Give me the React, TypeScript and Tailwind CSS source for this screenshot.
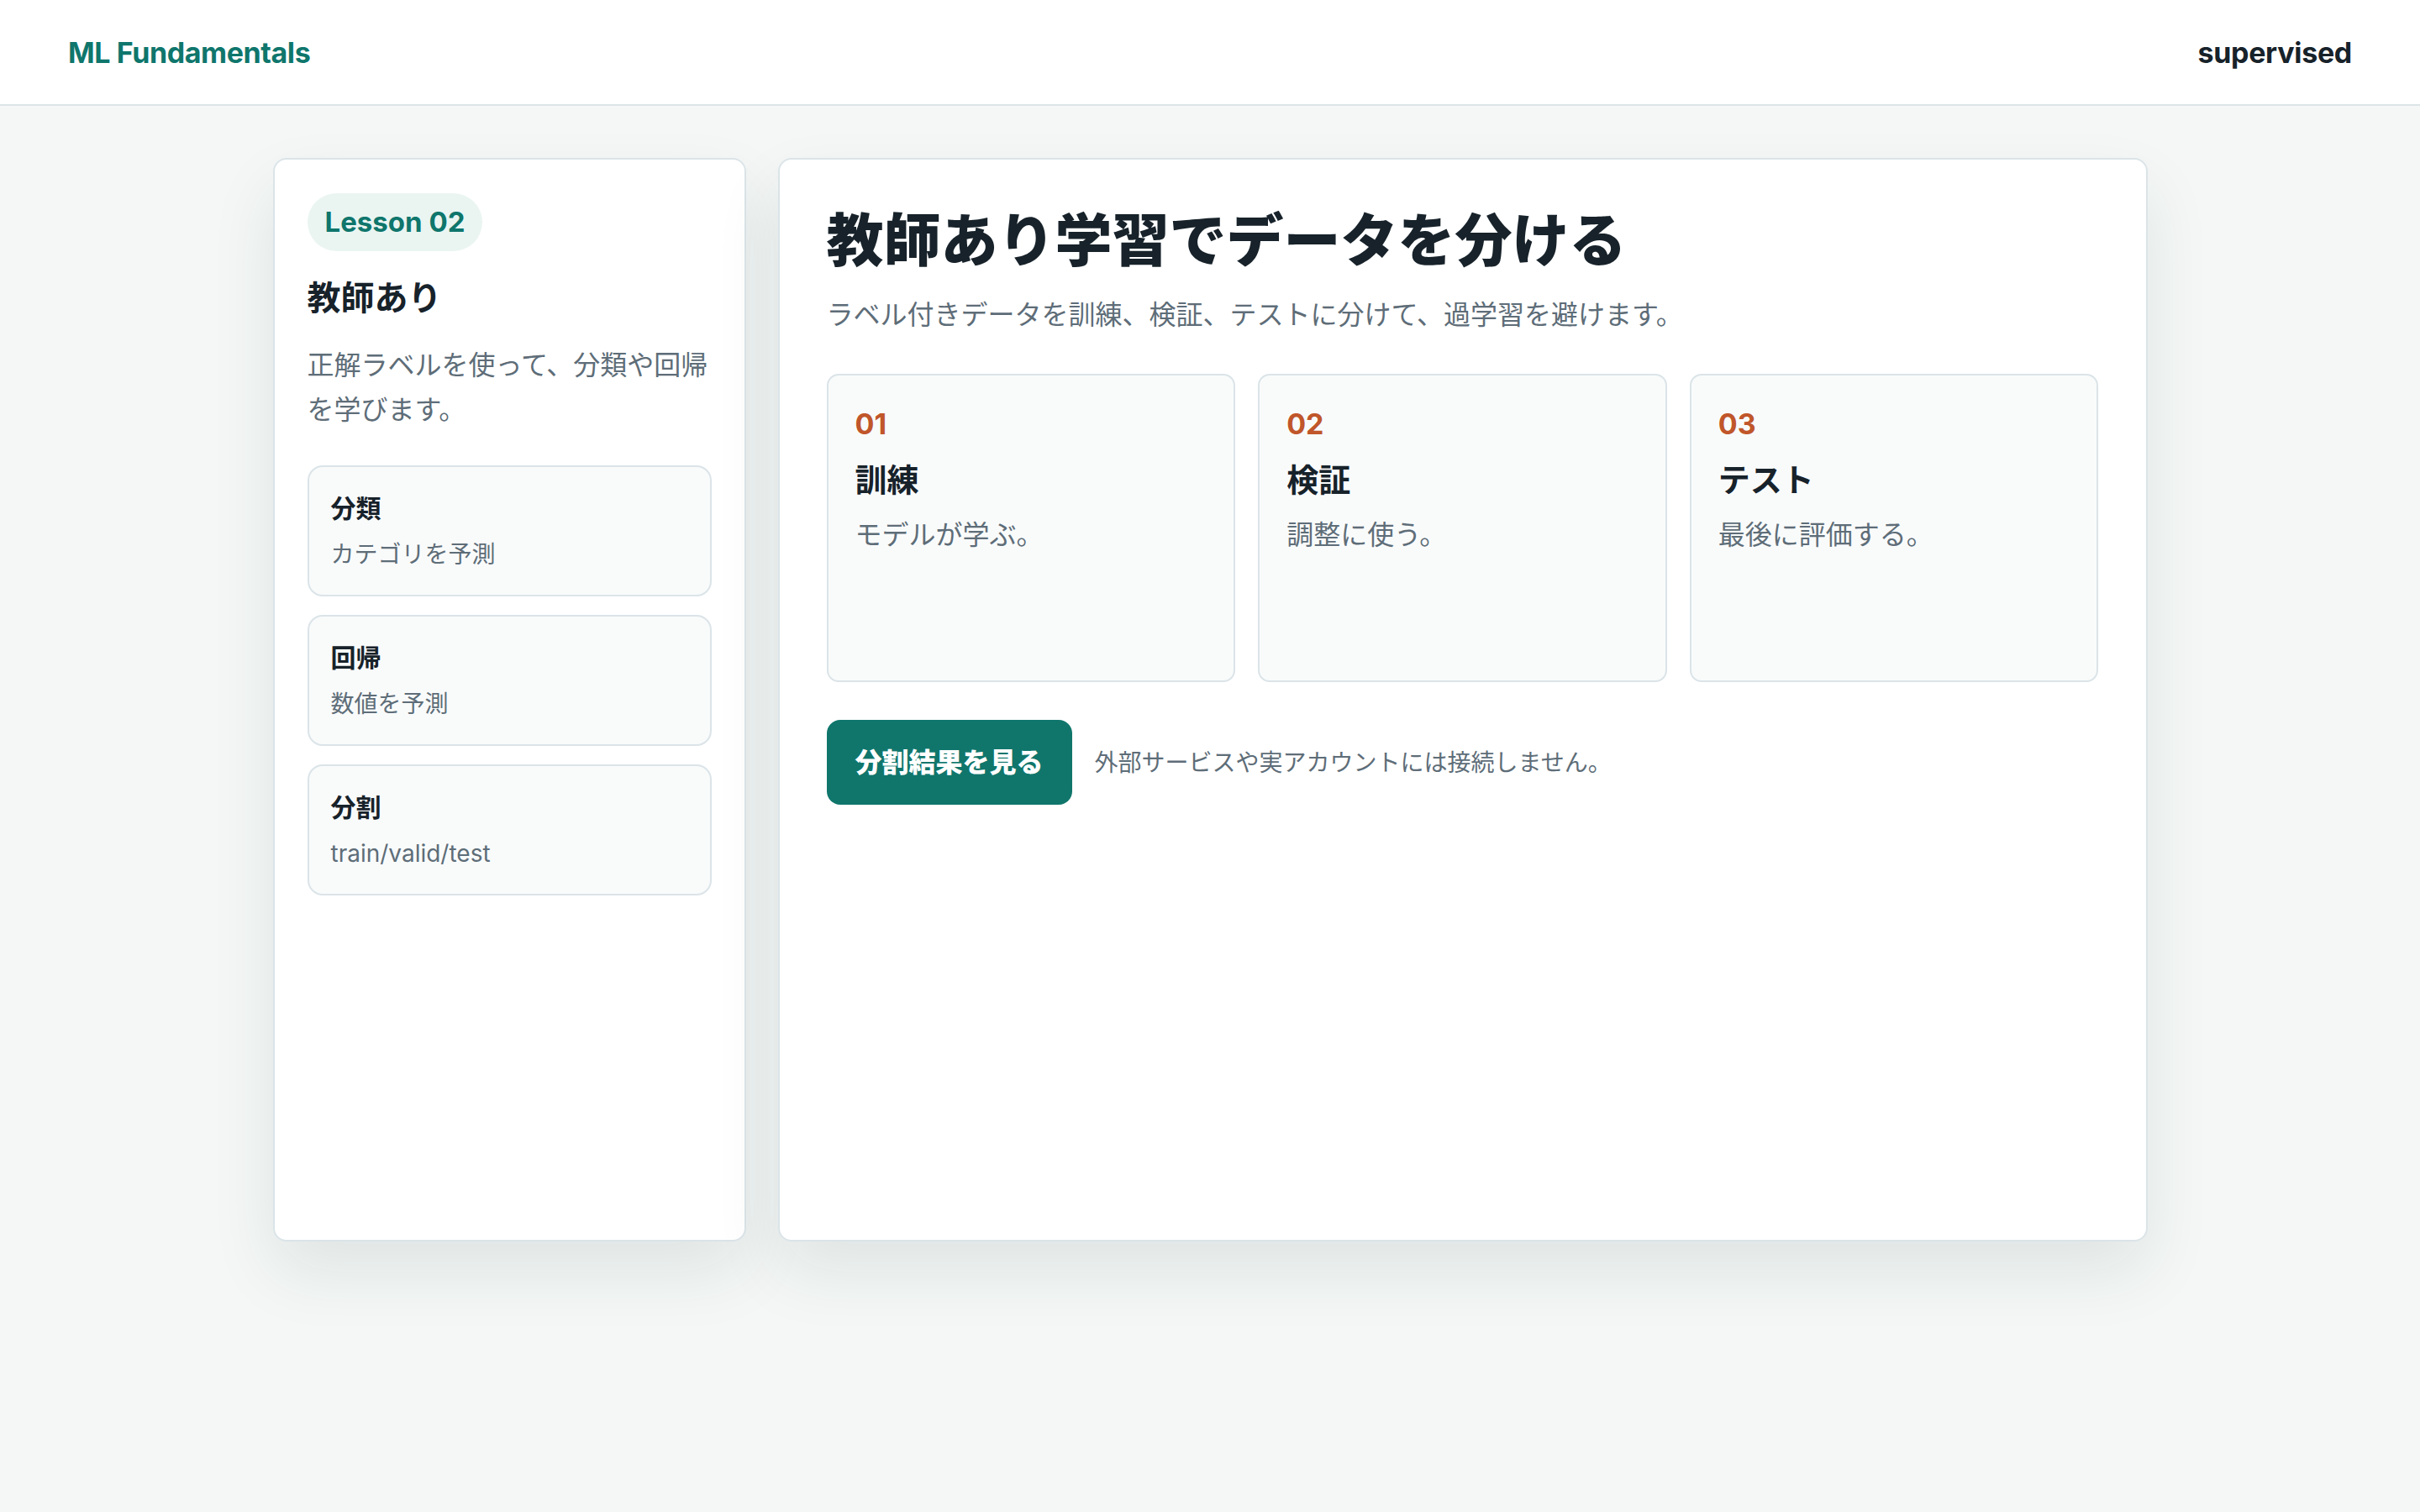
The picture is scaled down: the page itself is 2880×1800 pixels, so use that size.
const font = "font-['Inter','Noto_Sans_CJK_JP',sans-serif]";

const topics = [
  { title: "分類", sub: "カテゴリを予測" },
  { title: "回帰", sub: "数値を予測" },
  { title: "分割", sub: "train/valid/test" },
];

const steps = [
  { no: "01", title: "訓練", desc: "モデルが学ぶ。" },
  { no: "02", title: "検証", desc: "調整に使う。" },
  { no: "03", title: "テスト", desc: "最後に評価する。" },
];

export default function App() {
  return (
    <div className={`min-h-screen bg-[#f4f7f6] ${font}`}>
      {/* Header */}
      <header className="h-[126px] bg-white border-b-2 border-[#dde5e7] px-[81px] flex items-center justify-between">
        <span className="text-[34px] font-bold text-[#0f766c] tracking-[-0.4px]">ML Fundamentals</span>
        <span className="text-[34px] font-bold text-[#17222a] tracking-[-0.3px]">supervised</span>
      </header>

      <main className="pt-[62px] flex justify-center">
        <div className="flex gap-[38px] min-h-[1290px]">
          {/* Sidebar */}
          <aside className="w-[563px] bg-white border-2 border-[#dbe4e8] rounded-[16px] px-[39px] py-[40px] shadow-[0_36px_80px_rgba(20,50,50,0.09)]">
            <span className="inline-block rounded-full bg-[#eaf5f2] text-[#0f766c] text-[33px] font-bold leading-[51px] px-[21px] py-[9px]">
              Lesson 02
            </span>
            <h2 className="mt-[30px] text-[40px] font-bold leading-[52px] text-[#17222a]">教師あり</h2>
            <p className="mt-[27px] text-[32px] leading-[53px] text-[#5e6d78]">
              正解ラベルを使って、分類や回帰を学びます。
            </p>
            <div className="mt-[40px] flex flex-col gap-[22px]">
              {topics.map((t) => (
                <div
                  key={t.title}
                  className="border-2 border-[#dbe4e8] rounded-[18px] bg-[#f9fbfb] px-[26px] pt-[26px] pb-[27px]"
                >
                  <div className="text-[30px] font-bold leading-[46px] text-[#17222a]">{t.title}</div>
                  <div className="mt-[11px] text-[28px] leading-[42px] text-[#5e6d78]">{t.sub}</div>
                </div>
              ))}
            </div>
          </aside>

          {/* Main card */}
          <section className="w-[1630px] bg-white border-2 border-[#dbe4e8] rounded-[16px] px-[56px] pt-[54px] pb-[56px] shadow-[0_36px_80px_rgba(20,50,50,0.09)]">
            <h1 className="text-[68px] font-extrabold leading-[85px] text-[#17222a]">
              教師あり学習でデータを分ける
            </h1>
            <p className="mt-[22px] text-[32px] leading-[48px] text-[#5e6d78]">
              ラベル付きデータを訓練、検証、テストに分けて、過学習を避けます。
            </p>

            <div className="mt-[46px] grid grid-cols-3 gap-[27px]">
              {steps.map((s) => (
                <div
                  key={s.no}
                  className="min-h-[367px] border-2 border-[#dbe4e8] rounded-[14px] bg-[#f9fbfb] px-[32px] pt-[34px]"
                >
                  <div className="text-[34px] font-bold leading-[48px] text-[#c0562a]">{s.no}</div>
                  <div className="mt-[16px] text-[38px] font-bold leading-[52px] text-[#17222a]">{s.title}</div>
                  <div className="mt-[15px] text-[32px] leading-[50px] text-[#5e6d78]">{s.desc}</div>
                </div>
              ))}
            </div>

            <div className="mt-[45px] flex items-center gap-[27px]">
              <button className="h-[101px] px-[34px] rounded-[16px] bg-[#10766c] text-white text-[32px] font-extrabold">
                分割結果を見る
              </button>
              <span className="text-[28px] text-[#5e6d78]">外部サービスや実アカウントには接続しません。</span>
            </div>
          </section>
        </div>
      </main>
    </div>
  );
}
